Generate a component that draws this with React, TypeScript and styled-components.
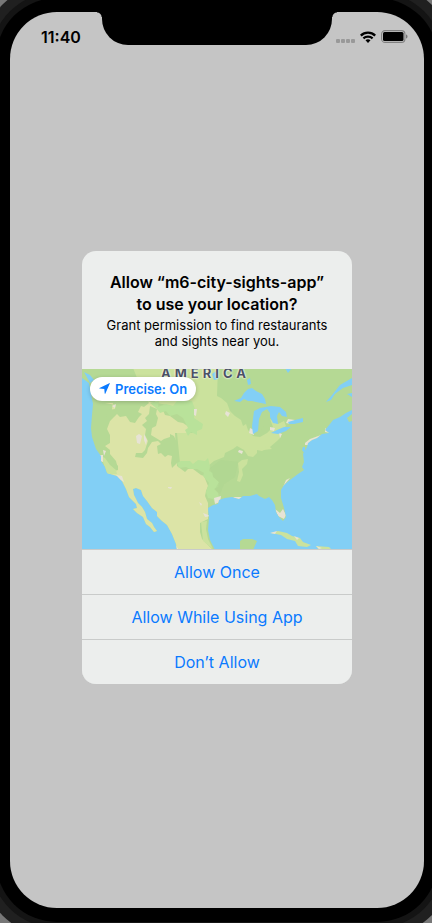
import React from "react";
import styled, { createGlobalStyle } from "styled-components";

const GlobalStyle = createGlobalStyle`
  *, *::before, *::after { box-sizing: border-box; }
  body {
    margin: 0;
    background: #777;
    overflow: hidden;
    font-family: Inter, "Liberation Sans", sans-serif;
    color: #000;
  }
`;

const Device = styled.div`
  display: flex;
  min-height: 100vh;
  padding: 12px 8px 15px 10px;
  overflow: hidden;
`;

const Screen = styled.div`
  flex: 1;
  display: flex;
  flex-direction: column;
  background: #c5c5c5;
  border-radius: 47px;
  box-shadow: 0 0 0 14px #000, 0 0 0 20px #141414, 0 0 0 30px #202020;
`;

const StatusBar = styled.header`
  display: grid;
  grid-template: 33px / 92px 1fr 92px;
`;

const Time = styled.time`
  padding: 15px 0 0 31px;
  font-size: 16px;
  line-height: 20px;
  font-weight: 600;
`;

const Notch = styled.div`
  position: relative;
  background: #000;
  border-radius: 0 0 26px 26px;

  &::before,
  &::after {
    content: "";
    position: absolute;
    top: 0;
    width: 5px;
    height: 5px;
  }
  &::before {
    right: 100%;
    background: radial-gradient(circle at 0 100%, transparent 4px, #000 5px);
  }
  &::after {
    left: 100%;
    background: radial-gradient(circle at 100% 100%, transparent 4px, #000 5px);
  }
`;

const Indicators = styled.div`
  display: flex;
  align-items: center;
  gap: 5px;
  padding: 16px 0 0 4px;
`;

const Main = styled.main`
  flex: 1;
  display: flex;
  align-items: center;
  justify-content: center;
  padding-bottom: 19px;
`;

const Alert = styled.section`
  width: 270px;
  overflow: hidden;
  border-radius: 14px;
  background: #eceeed;
`;

const AlertText = styled.div`
  padding: 20px;
  text-align: center;
`;

const Title = styled.h1`
  margin: 0 0 2px;
  font-size: 16px;
  line-height: 22px;
  font-weight: 600;
`;

const Message = styled.p`
  margin: 0;
  font-size: 13px;
  line-height: 16px;
`;

const MapFrame = styled.div`
  position: relative;
  height: 180px;
  overflow: hidden;

  svg.map {
    display: block;
    width: 100%;
    height: 100%;
  }
`;

const MapLabel = styled.span`
  position: absolute;
  top: -4px;
  left: 79px;
  font-size: 13px;
  line-height: 16px;
  font-weight: 700;
  letter-spacing: 4px;
  color: #4c5264;
  text-shadow: 0 0 2px #fff, 0 0 2px #fff;
`;

const PreciseButton = styled.button`
  position: absolute;
  top: 8px;
  left: 8px;
  display: flex;
  align-items: center;
  gap: 5px;
  height: 24px;
  padding: 0 9px;
  border: 0;
  border-radius: 12px;
  background: #fff;
  box-shadow: 0 1px 4px rgba(0, 0, 0, 0.2);
  color: #0a7aff;
  font: 600 13px/16px Inter, "Liberation Sans", sans-serif;
  white-space: nowrap;
`;

const Actions = styled.div`
  display: grid;
  gap: 1px;
  background: #c9cbca;
  border-top: 1px solid #c9cbca;
`;

const Action = styled.button`
  height: 44px;
  padding: 0;
  border: 0;
  background: #eceeed;
  color: #0a7aff;
  font: 400 16px/22px Inter, "Liberation Sans", sans-serif;
`;

const SignalIcon = () => (
  <svg width="19" height="12" viewBox="0 0 19 12" fill="#999" aria-hidden="true">
    {[0, 5, 10, 15].map((x) => (
      <rect key={x} x={x} y="8" width="4" height="4" rx="1" />
    ))}
  </svg>
);

const WifiIcon = () => (
  <svg width="16" height="12" viewBox="0 0 16 12" fill="none" stroke="#000" strokeWidth="2.3" aria-hidden="true">
    <path d="M.8 4.6C4.8.6 11.2.6 15.2 4.6" />
    <path d="M3.4 7.4C6 5 10 5 12.6 7.4" />
    <path d="M5.5 9.3C7 8 9 8 10.5 9.3L8 12Z" fill="#000" stroke="none" />
  </svg>
);

const BatteryIcon = () => (
  <svg width="27" height="13" viewBox="0 0 27 13" aria-hidden="true">
    <rect x=".6" y=".6" width="23.3" height="11.8" rx="3.5" fill="none" stroke="#808080" strokeWidth="1.1" />
    <rect x="2" y="2" width="20.5" height="9" rx="1.5" />
    <path d="M25 4.5C27 5 27 8 25 8.5Z" fill="#777" />
  </svg>
);

const ArrowIcon = () => (
  <svg width="11" height="11" viewBox="0 0 11 11" fill="#0a7aff" aria-hidden="true">
    <path d="M10.9.3 6.4 10.6Q6 11.2 5.7 10.5L5.3 5.9.6 5.6Q-.1 5.3.5 4.9L10.3.2Q10.9-.1 10.9.3Z" />
  </svg>
);

const LAND =
  "M0 -2H270V40L264 43 258 47 251 50 248 54 243 60 247 63 240 64 235 68 230 70 226 73 225 77 221 84 222 92 220 97 222 100 216 104 208 110 202 115 199 120 199 128 202 138 204 147 201 151 197 147 194 142 193 135 190 130 187 127 183 129 177 126 175 124 168 126 161 126 157 129 150 127 143 128 137 130 136 134 131 135 126 138 127 148 126 160 128 170 133 180H95L94 174 90 164 85 155 80 151 75 146 75 142 70 138 65 131 61 126 59 120 54 118 51 119 52 125 56 133 60 137 63 142 65 149 70 153 72 157 75 161 72 162 68 157 64 154 61 147 55 143 51 139 55 138 54 134 47 127 44 119 40 111 35 106 25 103 23 97 19 91 19 86 14 79 10 67 9 58 10 45 11 34 9 23 7 13 0 8Z";

const LocationMap = () => (
  <svg className="map" viewBox="0 -1 270 180" preserveAspectRatio="xMidYMid slice" role="img" aria-label="Map of North America">
    <defs>
      <clipPath id="land">
        <path d={LAND} />
      </clipPath>
    </defs>
    <path fill="#82cff5" d="M0 -2H270V180H0Z" />
    <path fill="#b5d994" d={LAND} />
    <g clipPath="url(#land)">
      <path fill="#cbe29d" d="M51 -2H136L135 26 139 28 145 33 148 41 153 46 159 50 161 56 164 54 166 60 171 66 178 67 185 63 191 57 188 49 196 54 202 51 204 56 198 61 199 67 195 71 188 77 180 81 175 80 175 83 171 87 166 86 162 80 155 76 151 79 143 83 142 87 132 91 126 96 98 93 95 63 111 63 105 39 75 33 60 20Z" />
      <path fill="#dce4a7" d="M23 33 31 33 28 51 25 59 28 65 28 73 23 76 28 80 28 86 36 96 36 100 25 103 20 110 40 190H133L130 179 120 169 118 162 118 153 126 149 126 133 123 126 124 121 126 116 122 106 119 105 111 99 106 99 103 102 95 96 93 63 105 63 107 57 101 53 96 52 88 46 83 45 80 38 76 39 73 33 58 30 50 38Z" />
      <path fill="#b5d994" d="M34 30 65 30 67 33 62 37 59 36 56 42 60 44 57 47 53 53 48 52 44 46 38 47 35 44 28 51 24 47 26 40 33 39Z" />
      <path fill="#b5d994" d="M68 36 75 39 74 44 76 48 74 56 70 58 69 65 74 68 79 71 82 69 88 67 88 64 92 66 95 73 95 93 92 96 90 98 89 93 90 86 86 85 83 87 79 83 76 84 75 76 79 74 76 71 70 72 66 78 65 83 61 88 53 87 54 83 60 83 63 80 66 71 63 65 64 59 60 55 65 51 63 48 67 44Z" />
      <path fill="#b5d994" d="M18 74 24 79 28 84 34 91 36 99 33 99 28 93 23 84 18 79Z" />
      <path fill="#cbe29d" d="M19 86 23 88 28 95 34 100 35 104 25 104Z" />
      <path fill="#b9e29a" d="M68 33 77 31 76 37 84 34 91 36 95 31 110 31 113 39 112 48 121 54 120 59 115 61 115 65 109 62 106 66 103 60 106 58 101 48 95 44 88 46 84 41 78 43 74 38Z" />
      <path fill="#b9e29a" d="M95 93 99 91 108 91 111 94 116 90 123 91 126 88 128 96 127 101 131 103 131 107 137 112 136 117 132 119 136 123 137 128 133 133 131 129 126 128 124 122 127 113 121 106 122 103 115 99 108 99 104 97 97 98Z" />
      <path fill="#add58f" opacity=".5" d="M128 98 139 90 156 92 153 107 142 114 138 124 133 119 137 112 131 106Z" />
      <path fill="#cbe29d" d="M156 93 160 90 166 89 165 94 160 99 161 105 158 112 155 111 157 102ZM119 152 125 151 124 159 126 169 131 179 121 171ZM173 80 187 76 190 79 182 80Z" />
      <path fill="#b5d994" d="M177 43 181 41 185 43 187 52 183 56 178 60 176 55Z" />
      <g fill="#e7e3d5">
        <path d="M54 66 57 64 60 66 58 74 55 73ZM62 64 65 70 64 75 62 70ZM30 36 34 34 33 38ZM21 80 24 81 22 86ZM16 85 21 85 21 92 18 91ZM34 105 40 106 42 112 38 110ZM112 39 115 39 114 46 112 45ZM144 41 148 43 146 47 143 44ZM168 58 172 60 172 65 167 63ZM188 57 193 58 192 61 188 60ZM197 63 200 64 198 68ZM206 49 213 50 209 54 204 53ZM223 73 228 69 239 65 237 68 230 71 227 75 223 75ZM243 58 248 63 243 62ZM157 80 161 81 160 84 156 82ZM132 128 139 126 138 132 133 134ZM151 127 161 127 160 130 153 129ZM193 139 198 143 201 139 204 145 202 149 196 146ZM208 108 203 114 201 117 204 110ZM86 117 90 117 89 119 86 118ZM117 132 120 134 119 136ZM121 143 129 146 123 147ZM93 174 97 180H92Z" />
      </g>
    </g>
    <g fill="#82cff5">
      <path d="M152 31 159 28 162 23 166 19 170 18 174 21 180 24 183 29 184 34 179 33 174 32 170 31 166 31 162 29 158 32Z" />
      <path d="M172 41 178 38 189 36 198 37 204 42 205 47 200 46 197 42 195 46 196 54 191 53 188 47 188 43 185 39 180 42 177 49 176 61 171 64 170 56Z" />
      <path d="M189 63 195 60 202 57 209 57 204 61 196 64Z" />
      <path d="M206 52 213 50 221 48 221 52 212 54 207 54Z" />
      <path d="M165 10 168 8 169 14 166 15ZM203 -2H210L206 3ZM244 32 250 25 258 15 270 8V15L261 18 253 24 249 30ZM265 24 270 23V27ZM130 4 134 1 136 9 132 10ZM2 2 8 5 12 10 8 13Z" />
      <path d="M221 77 223 77 223 84 220 80ZM228 74 226 81 228 84 224 86 224 79Z" />
    </g>
    <path fill="#b5d994" d="M270 44 265 48 267 52 270 51ZM158 180 158 171 161 169 170 169 175 171 171 180Z" />
    <path fill="#cbe29d" d="M189 163 196 161 205 163 210 166 218 168 221 172 229 175 225 177 216 176 213 171 205 169 199 165ZM234 176 247 177 250 180H237Z" />
    <path fill="#e7e3d5" d="M188 163 195 161 193 164ZM212 166 217 168 215 170ZM234 176 240 178 237 179Z" />
  </svg>
);

export default function App() {
  return (
    <>
      <GlobalStyle />
      <Device>
        <Screen>
          <StatusBar>
            <Time>11:40</Time>
            <Notch />
            <Indicators>
              <SignalIcon />
              <WifiIcon />
              <BatteryIcon />
            </Indicators>
          </StatusBar>
          <Main>
            <Alert role="alertdialog" aria-labelledby="alert-title" aria-describedby="alert-message">
              <AlertText>
                <Title id="alert-title">Allow “m6-city-sights-app” to use your location?</Title>
                <Message id="alert-message">Grant permission to find restaurants and sights near you.</Message>
              </AlertText>
              <MapFrame>
                <LocationMap />
                <MapLabel>AMERICA</MapLabel>
                <PreciseButton type="button">
                  <ArrowIcon />
                  Precise: On
                </PreciseButton>
              </MapFrame>
              <Actions>
                <Action type="button">Allow Once</Action>
                <Action type="button">Allow While Using App</Action>
                <Action type="button">Don’t Allow</Action>
              </Actions>
            </Alert>
          </Main>
        </Screen>
      </Device>
    </>
  );
}
